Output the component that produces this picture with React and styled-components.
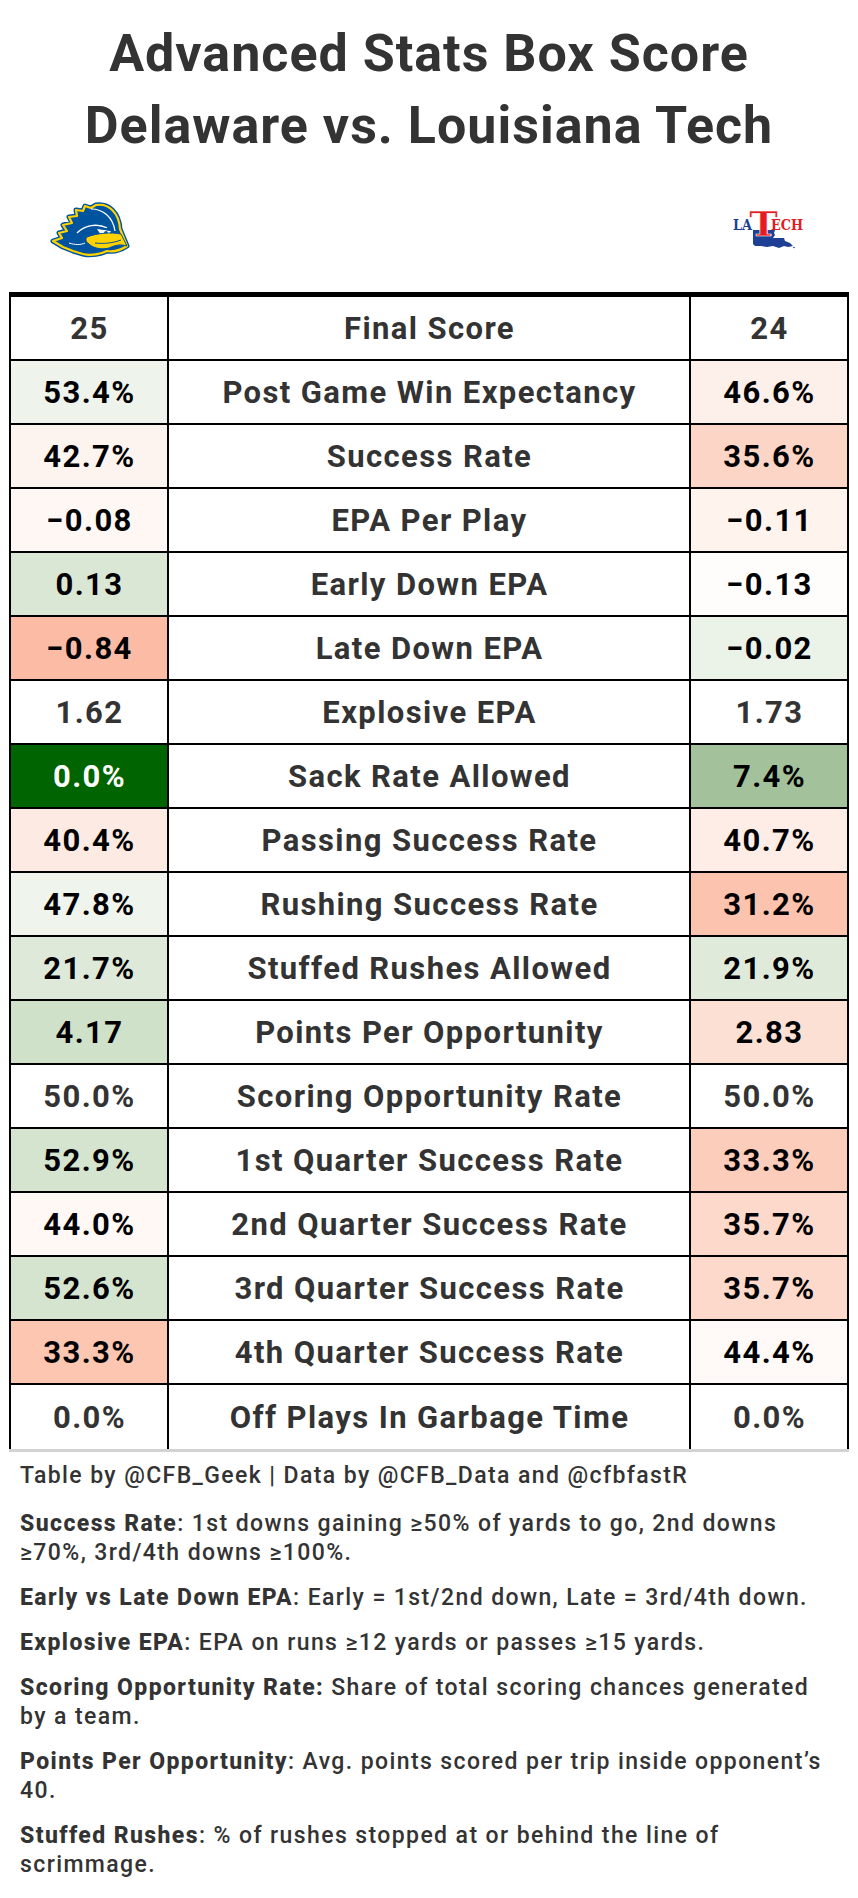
import React from "react";
import styled, { createGlobalStyle } from "styled-components";

const GlobalStyle = createGlobalStyle`
  html, body {
    margin: 0;
    padding: 0;
    background: #fff;
  }
  * {
    box-sizing: border-box;
  }
`;

const Page = styled.div`
  width: 858px;
  font-family: Roboto, "Liberation Sans", sans-serif;
  color: #333;
  padding-bottom: 20px;
`;

const Title = styled.h1`
  margin: 0;
  padding-top: 18px;
  font-size: 52px;
  line-height: 72px;
  letter-spacing: 1px;
  font-weight: 700;
  text-align: center;
  color: #333;
`;

const Columns = `
  display: grid;
  grid-template-columns: 158px 522px 158px;
  margin-left: 9px;
  width: 840px;
`;

const LogoRow = styled.div`
  ${Columns}
  height: 130px;
  padding: 6px 0 0 2px;
  align-items: center;
  justify-items: center;
`;

const Logo = styled.svg`
  overflow: visible;
`;

const Table = styled.div`
  ${Columns}
  border-left: 2px solid #000;
  border-top: 5px solid #000;
`;

const Cell = styled.div`
  height: 64px;
  display: flex;
  align-items: center;
  justify-content: center;
  padding-left: 1px;
  border-right: 2px solid #000;
  border-bottom: ${({ $last }) => ($last ? "none" : "2px solid #000")};
  background: ${({ $bg }) => $bg || "#fff"};
  color: ${({ $fg }) => $fg || "#333"};
  font-size: 31px;
  letter-spacing: 1.4px;
  font-weight: 700;
  white-space: nowrap;
`;

const Notes = styled.div`
  margin-left: 9px;
  width: 840px;
  border-top: 3px solid #d3d3d3;
  padding: 9px 0 0 11px;
  font-size: 23px;
  line-height: 29px;
  letter-spacing: 1.4px;
  font-weight: 500;
  color: #333;
`;

const Note = styled.p`
  margin: 0 0 16px;
  &:first-child {
    margin-bottom: 19px;
  }
`;

const Label = styled.b`
  font-weight: 800;
`;

const henOutline =
  "M45 2 C58 0 68 10 69 26 L76 43 C70 47 62 49 56 48 C50 51 40 53 32 51 L22 48 L12 44 L2 38 L11 35 L8 30 L16 28 L12 22 L21 20 L18 14 L26 13 L25 7 L32 8 L34 3 L40 5 Z";

const BlueHen = () => (
  <Logo width="78" height="54" viewBox="0 0 78 54">
    <path d={henOutline} fill="#00539f" stroke="#00539f" strokeWidth="5" strokeLinejoin="round" />
    <path d={henOutline} fill="#00539f" stroke="#ffd200" strokeWidth="2.2" strokeLinejoin="round" />
    <path d="M40 6 C52 6 62 14 64 28" fill="none" stroke="#fff" strokeWidth="1.2" />
    <path d="M26 30 C34 22 46 20 56 25" fill="none" stroke="#fff" strokeWidth="1.5" />
    <path d="M46 26 L60 28 L57 33 L50 32 Z" fill="#fff" />
    <circle cx="55" cy="30" r="1.9" fill="#00539f" />
    <path d="M44 24 L60 27" stroke="#00539f" strokeWidth="2" />
    <path
      d="M36 34 C46 30 60 29 70 31 L76 43 C70 41 64 42 58 45 C50 47 42 45 38 41 C35 39 34 36 36 34 Z"
      fill="#ffd200"
      stroke="#00539f"
      strokeWidth="1"
    />
    <path d="M44 40 C54 41 62 40 70 37" fill="none" stroke="#00539f" strokeWidth="1" />
    <path d="M18 40 C24 42 30 42 34 40" fill="none" stroke="#fff" strokeWidth="1" />
  </Logo>
);

const LaTech = () => (
  <Logo width="76" height="54" viewBox="0 -8 76 54">
    <path
      d="M21 19 L43 19 L42 22 L43 24 L41 27 L52 27 L53 30 L58 32 L61 35 L56 36 L52 35 L47 37 L41 35 L35 36 L29 35 L23 35 L21 33 Z"
      fill="#1d3f94"
    />
    <circle cx="62" cy="36.5" r="0.8" fill="#1d3f94" />
    <text fontFamily="'DejaVu Serif', serif" fontWeight="700">
      <tspan x="1" y="19" fontSize="15" fill="#1d3f94" textLength="19" lengthAdjust="spacingAndGlyphs">
        LA
      </tspan>
      <tspan
        x="17"
        y="25"
        fontSize="34"
        fill="#e31b23"
        stroke="#fff"
        strokeWidth="0.6"
        textLength="29"
        lengthAdjust="spacingAndGlyphs"
      >
        T
      </tspan>
      <tspan x="39" y="19" fontSize="15" fill="#e31b23" textLength="32" lengthAdjust="spacingAndGlyphs">
        ECH
      </tspan>
    </text>
  </Logo>
);

const W = "#fff";
const rows = [
  ["53.4%", "Post Game Win Expectancy", "46.6%", "#eef3ec", "#fdf0ea"],
  ["42.7%", "Success Rate", "35.6%", "#fef4ef", "#fcd5c6"],
  ["\u22120.08", "EPA Per Play", "\u22120.11", "#fff7f3", "#fef3ed"],
  ["0.13", "Early Down EPA", "\u22120.13", "#d9e7d4", "#fffdfc"],
  ["\u22120.84", "Late Down EPA", "\u22120.02", "#fcbba4", "#ebf2e8"],
  ["1.62", "Explosive EPA", "1.73", W, W],
  ["0.0%", "Sack Rate Allowed", "7.4%", "#006400", "#a3c19b"],
  ["40.4%", "Passing Success Rate", "40.7%", "#fdeae2", "#fdede6"],
  ["47.8%", "Rushing Success Rate", "31.2%", "#eff4ed", "#fcc3ae"],
  ["21.7%", "Stuffed Rushes Allowed", "21.9%", "#dee9da", "#dfeadb"],
  ["4.17", "Points Per Opportunity", "2.83", "#cfe1c9", "#fde0d4"],
  ["50.0%", "Scoring Opportunity Rate", "50.0%", W, W],
  ["52.9%", "1st Quarter Success Rate", "33.3%", "#d4e4ce", "#fccdbb"],
  ["44.0%", "2nd Quarter Success Rate", "35.7%", "#fff8f5", "#fdd9cb"],
  ["52.6%", "3rd Quarter Success Rate", "35.7%", "#d5e4cf", "#fdd9cb"],
  ["33.3%", "4th Quarter Success Rate", "44.4%", "#fcc6b1", "#fffaf8"],
  ["0.0%", "Off Plays In Garbage Time", "0.0%", W, W],
];

const textFor = (bg) => {
  if (bg === W) return "#333";
  if (bg === "#006400") return "#fff";
  return "#000";
};

const App = () => {
  return (
    <Page>
      <GlobalStyle />
      <Title>
        Advanced Stats Box Score
        <br />
        Delaware vs. Louisiana Tech
      </Title>
      <LogoRow>
        <BlueHen />
        <span />
        <LaTech />
      </LogoRow>
      <Table>
        <Cell>25</Cell>
        <Cell>Final Score</Cell>
        <Cell>24</Cell>
        {rows.map(([a, label, b, bgA, bgB], i) => {
          const last = i === rows.length - 1;
          return (
            <React.Fragment key={label}>
              <Cell $bg={bgA} $fg={textFor(bgA)} $last={last}>{a}</Cell>
              <Cell $last={last}>{label}</Cell>
              <Cell $bg={bgB} $fg={textFor(bgB)} $last={last}>{b}</Cell>
            </React.Fragment>
          );
        })}
      </Table>
      <Notes>
        <Note>Table by @CFB_Geek | Data by @CFB_Data and @cfbfastR</Note>
        <Note>
          <Label>Success Rate</Label>: 1st downs gaining ≥50% of yards to go, 2nd downs
          <br />
          ≥70%, 3rd/4th downs ≥100%.
        </Note>
        <Note>
          <Label>Early vs Late Down EPA</Label>: Early = 1st/2nd down, Late = 3rd/4th down.
        </Note>
        <Note>
          <Label>Explosive EPA</Label>: EPA on runs ≥12 yards or passes ≥15 yards.
        </Note>
        <Note>
          <Label>Scoring Opportunity Rate:</Label> Share of total scoring chances generated
          <br />
          by a team.
        </Note>
        <Note>
          <Label>Points Per Opportunity</Label>: Avg. points scored per trip inside opponent’s
          <br />
          40.
        </Note>
        <Note>
          <Label>Stuffed Rushes</Label>: % of rushes stopped at or behind the line of
          <br />
          scrimmage.
        </Note>
      </Notes>
    </Page>
  );
};

export default App;
